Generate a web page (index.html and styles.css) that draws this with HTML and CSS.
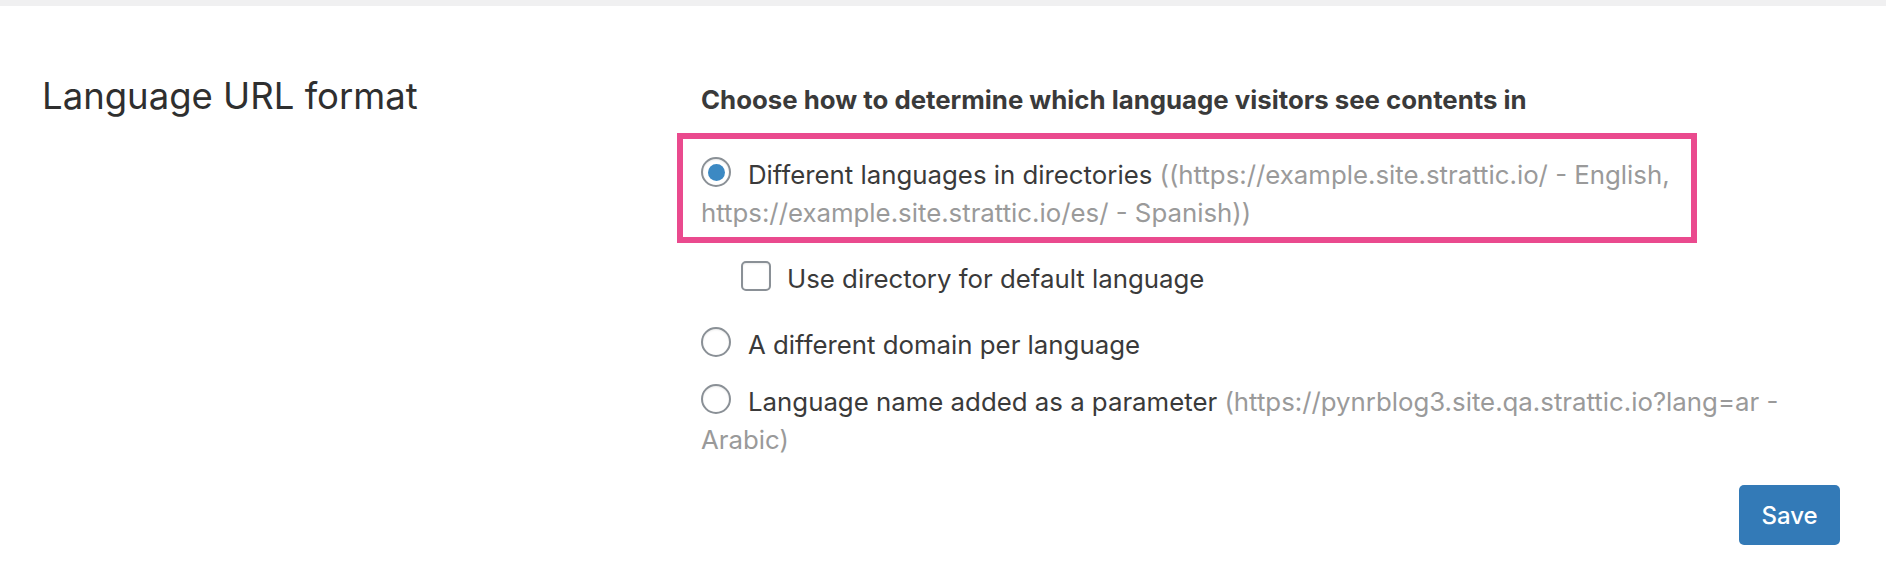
FILE: index.html
```html
<!DOCTYPE html>
<html lang="en">
<head>
<meta charset="utf-8">
<title>Language URL format</title>
<link rel="stylesheet" href="styles.css">
</head>
<body>
<div class="topbar"></div>
<main class="settings">
  <h2 class="title">Language URL format</h2>
  <div class="field">
    <p class="heading">Choose how to determine which language visitors see contents in</p>
    <div class="options">
      <div class="highlight">
        <label class="option"><span class="radio checked"></span>Different languages in directories <span class="hint">((https://example.site.strattic.io/ - English, https://example.site.strattic.io/es/ - Spanish))</span></label>
      </div>
      <label class="option sub"><span class="checkbox"></span>Use directory for default language</label>
      <label class="option domain"><span class="radio"></span>A different domain per language</label>
      <label class="option param"><span class="radio"></span>Language name added as a parameter <span class="hint">(https://pynrblog3.site.qa.strattic.io?lang=ar - Arabic)</span></label>
    </div>
    <div class="actions"><button class="btn" type="button">Save</button></div>
  </div>
</main>
</body>
</html>
```

FILE: styles.css
```css
html, body {
  margin: 0;
  padding: 0;
  background: #ffffff;
}
body {
  font-family: Inter, "Noto Sans", "Liberation Sans", sans-serif;
  color: #333333;
}
.topbar {
  height: 6px;
  background: #f0f0f1;
}
.settings {
  display: grid;
  grid-template-columns: 659px 1fr;
  padding: 68px 46px 0 42px;
}
.title {
  margin: 0;
  font-size: 36.5px;
  line-height: 44px;
  font-weight: 400;
  color: #2f2f2f;
}
.field {
  display: flex;
  flex-direction: column;
}
.heading {
  margin: 9px 0 0;
  font-size: 25.8px;
  line-height: 34px;
  font-weight: 700;
  color: #3a3a3a;
}
.options {
  display: flex;
  flex-direction: column;
  margin-top: 16px;
}
.highlight {
  box-sizing: border-box;
  width: 1020px;
  margin-left: -24px;
  border: 6px solid #ea4a8e;
  padding: 17px 0 5px 18px;
}
.option {
  display: block;
  font-size: 25.8px;
  line-height: 38px;
  color: #3a3a3a;
}
.option.sub {
  margin-top: 17px;
  padding-left: 40px;
}
.option.domain {
  margin-top: 28px;
}
.option.param {
  margin-top: 19px;
}
.hint {
  color: #9a9a9a;
}
.radio {
  display: inline-block;
  box-sizing: border-box;
  width: 30px;
  height: 30px;
  margin-right: 17px;
  border: 2px solid #8a9096;
  border-radius: 50%;
  vertical-align: -3px;
  position: relative;
  background: #fff;
  box-shadow: inset 0 1px 2px rgba(0, 0, 0, 0.08);
}
.radio.checked::after {
  content: "";
  position: absolute;
  left: 4.5px;
  top: 4.5px;
  width: 17px;
  height: 17px;
  border-radius: 50%;
  background: #3c89c3;
}
.checkbox {
  display: inline-block;
  box-sizing: border-box;
  width: 30px;
  height: 30px;
  margin-right: 16px;
  border: 2px solid #8a9096;
  border-radius: 5px;
  vertical-align: -3px;
  background: #fff;
  box-shadow: inset 0 1px 2px rgba(0, 0, 0, 0.08);
}
.actions {
  display: flex;
  justify-content: flex-end;
  margin-top: 26px;
}
.btn {
  width: 101px;
  height: 60px;
  padding: 0;
  border: 0;
  border-radius: 5px;
  background: #337ab7;
  color: #ffffff;
  font-family: Inter, "Noto Sans", "Liberation Sans", sans-serif;
  font-size: 24px;
  font-weight: 500;
}
```
